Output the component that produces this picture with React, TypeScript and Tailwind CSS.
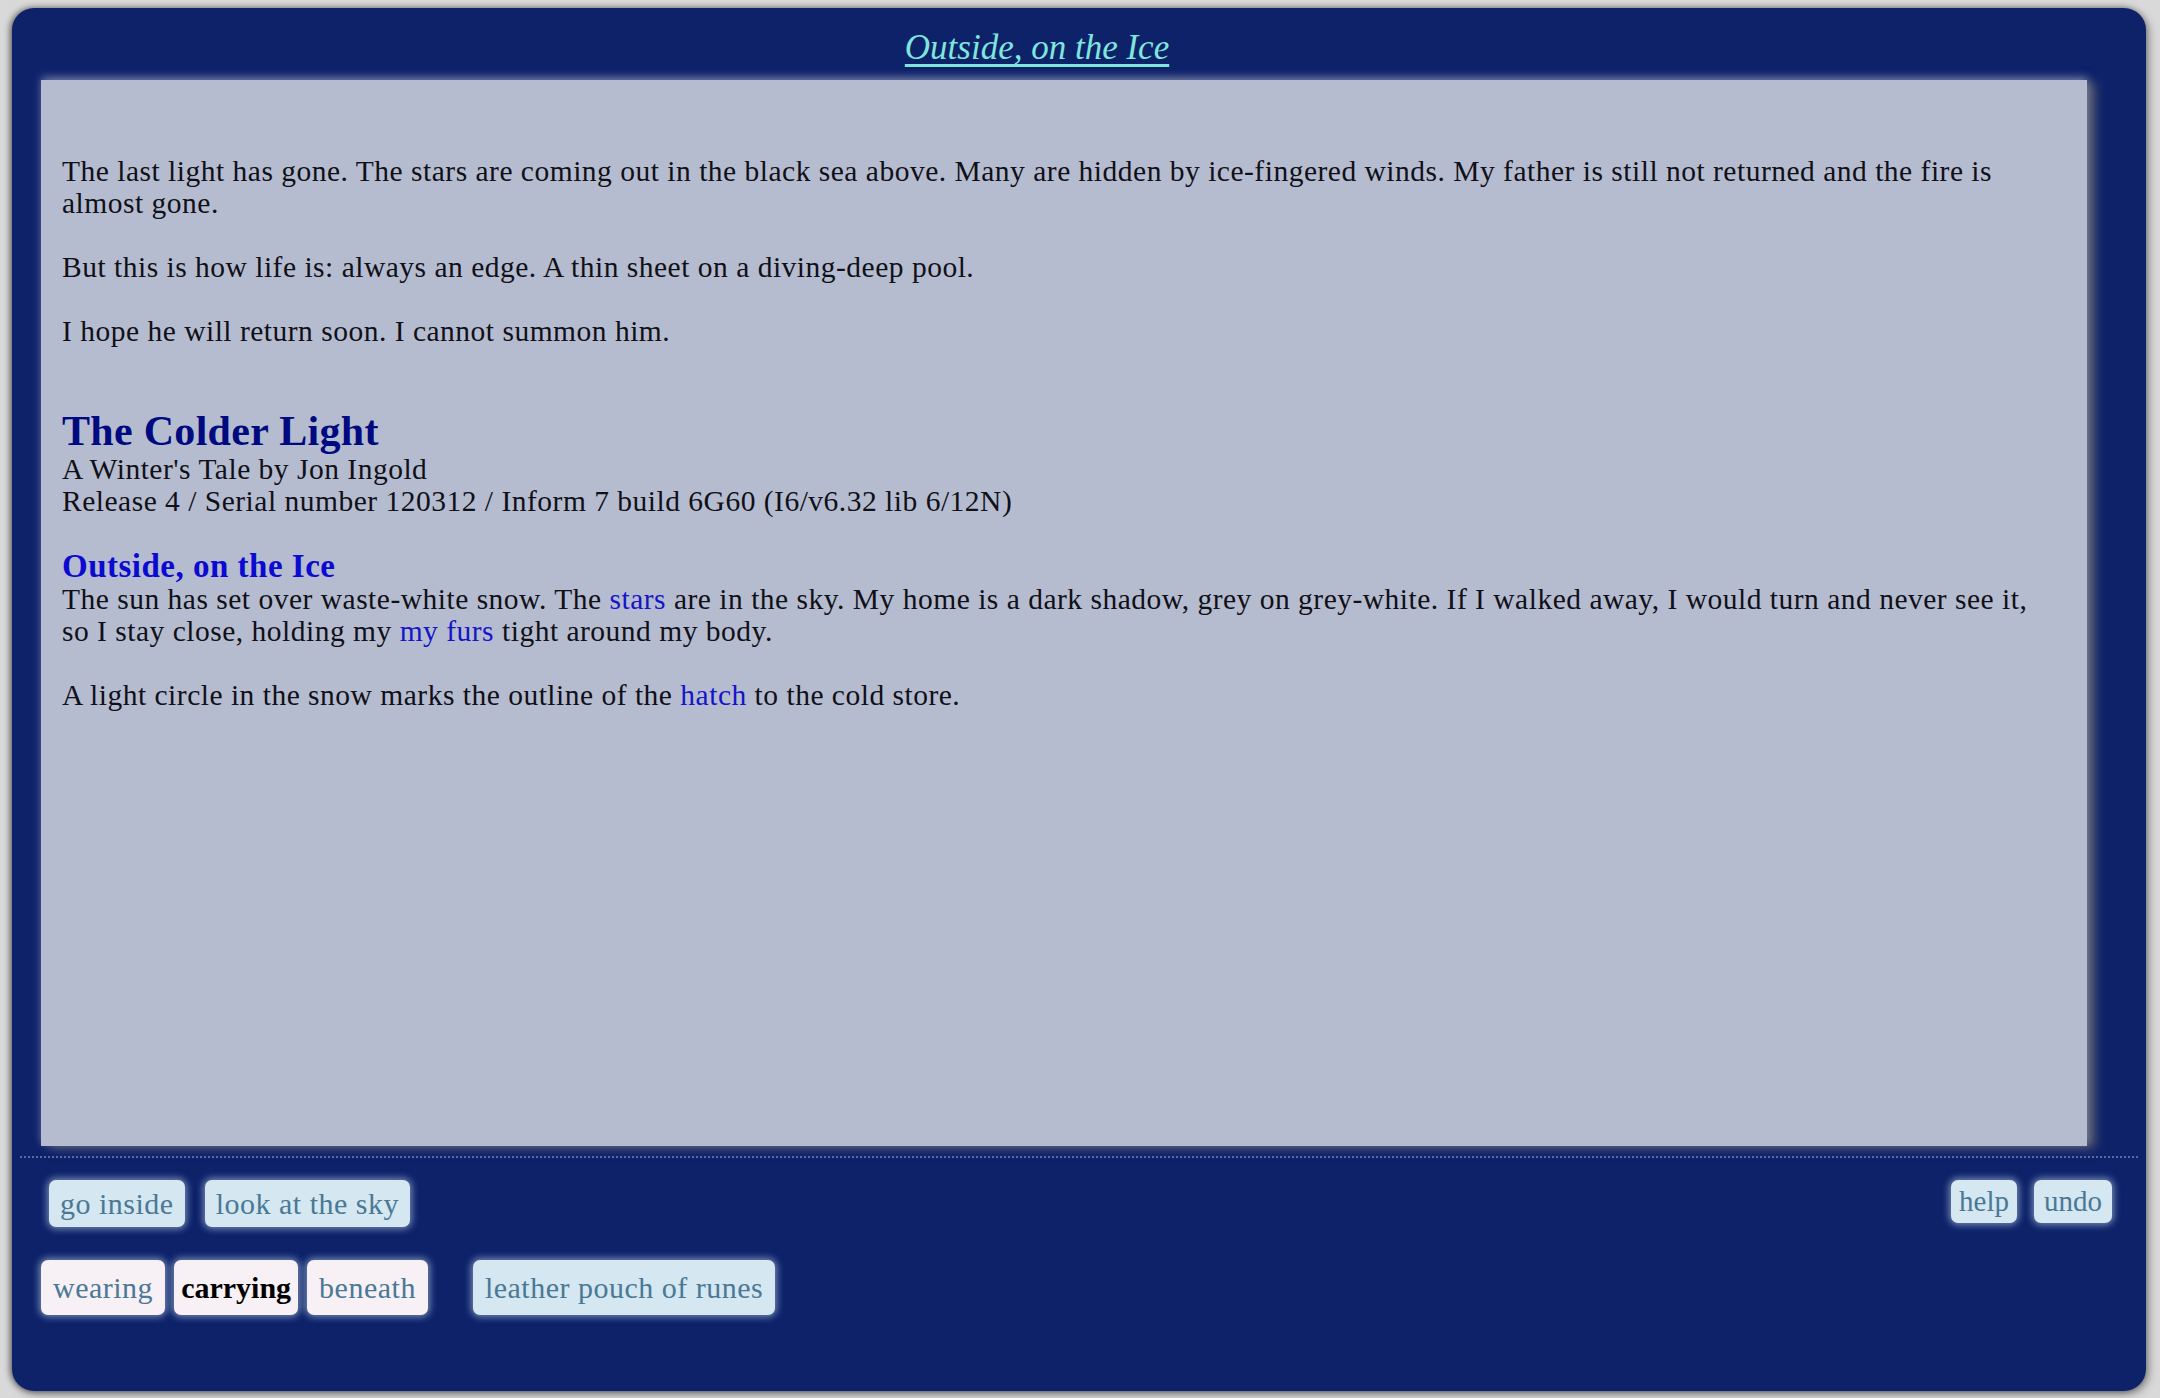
const serif = { fontFamily: '"Liberation Serif", "DejaVu Serif", serif' };

function CmdButton({ label, className = '' }: { label: string; className?: string }) {
  return (
    <button
      className={
        'rounded-[7px] bg-[#d5e7f0] text-[#4a7896] shadow-[0_0_7px_2px_rgba(200,225,240,0.55)] ' + className
      }
    >
      {label}
    </button>
  );
}

function Tab({ label, active }: { label: string; active?: boolean }) {
  return (
    <button
      className={
        'h-[55px] rounded-[7px] bg-[#f7f0f4] text-[30px] tracking-[0.5px] shadow-[0_0_7px_2px_rgba(200,225,240,0.55)] ' +
        (active ? 'px-[7px] font-bold tracking-normal text-black' : 'px-[12px] text-[#4a7896]')
      }
    >
      {label}
    </button>
  );
}

export default function App() {
  return (
    <div
      className="min-h-screen bg-[#d9d9d9] pt-[8px] pl-[12px] pr-[14px] pb-[7px]"
      style={serif}
    >
      <div className="flex h-[1383px] flex-col rounded-[22px] bg-[#0e226a] shadow-[-2px_0_6px_rgba(0,0,0,0.5),3px_3px_8px_rgba(0,0,0,0.35)]">
        {/* header */}
        <div className="flex h-[72px] items-start justify-center pr-[84px] pt-[20px]">
          <a className="text-[35px] leading-[40px] italic text-[#7fe6dc] underline decoration-[3px] underline-offset-[5px]">
            Outside, on the Ice
          </a>
        </div>

        {/* story window */}
        <div className="ml-[29px] mr-[59px] h-[1066px] bg-[#b6bccf] pl-[21px] pr-[40px] pt-[75px] text-[29.5px] leading-[32px] tracking-[0.5px] text-[#101018] shadow-[0_-3px_8px_rgba(150,160,200,0.6),8px_2px_10px_rgba(100,100,110,0.9)]">
          <p>
            The last light has gone. The stars are coming out in the black sea above. Many are hidden by
            ice-fingered winds. My father is still not returned and the fire is almost gone.
          </p>
          <p className="mt-[32px]">But this is how life is: always an edge. A thin sheet on a diving-deep pool.</p>
          <p className="mt-[32px]">I hope he will return soon. I cannot summon him.</p>

          <h1 className="mt-[62px] text-[42px] leading-[44px] font-bold tracking-[0.3px] text-[#000a80]">
            The Colder Light
          </h1>
          <p>A Winter's Tale by Jon Ingold</p>
          <p>Release 4 / Serial number 120312 / Inform 7 build 6G60 (I6/v6.32 lib 6/12N)</p>

          <h2 className="mt-[32px] text-[33px] leading-[34px] font-bold tracking-[0.5px] text-[#0a0ad0]">
            Outside, on the Ice
          </h2>
          <p>
            The sun has set over waste-white snow. The <a className="text-[#1515c8]">stars</a> are in the sky.
            My home is a dark shadow, grey on grey-white. If I walked away, I would turn and never see it, so I
            stay close, holding my <a className="text-[#1515c8]">my furs</a> tight around my body.
          </p>
          <p className="mt-[32px]">
            A light circle in the snow marks the outline of the <a className="text-[#1515c8]">hatch</a> to the
            cold store.
          </p>
        </div>

        {/* divider */}
        <div className="mx-[8px] mt-[10px] border-t-[2px] border-dotted border-[#5a6aa0]" />

        {/* commands */}
        <div className="mt-[22px] flex items-start justify-between pl-[37px] pr-[34px]">
          <div className="flex gap-[20px]">
            <CmdButton label="go inside" className="h-[47px] px-[11px] text-[30px] tracking-[0.5px]" />
            <CmdButton label="look at the sky" className="h-[47px] px-[11px] text-[30px] tracking-[0.5px]" />
          </div>
          <div className="flex gap-[17px]">
            <CmdButton label="help" className="h-[43px] px-[8px] text-[29px]" />
            <CmdButton label="undo" className="h-[43px] px-[10px] text-[29px]" />
          </div>
        </div>

        <div className="mt-[33px] flex items-center pl-[29px]">
          <div className="flex gap-[9px]">
            <Tab label="wearing" />
            <Tab label="carrying" active />
            <Tab label="beneath" />
          </div>
          <CmdButton
            label="leather pouch of runes"
            className="ml-[45px] h-[55px] px-[12px] text-[30px] tracking-[0.5px]"
          />
        </div>
      </div>
    </div>
  );
}
